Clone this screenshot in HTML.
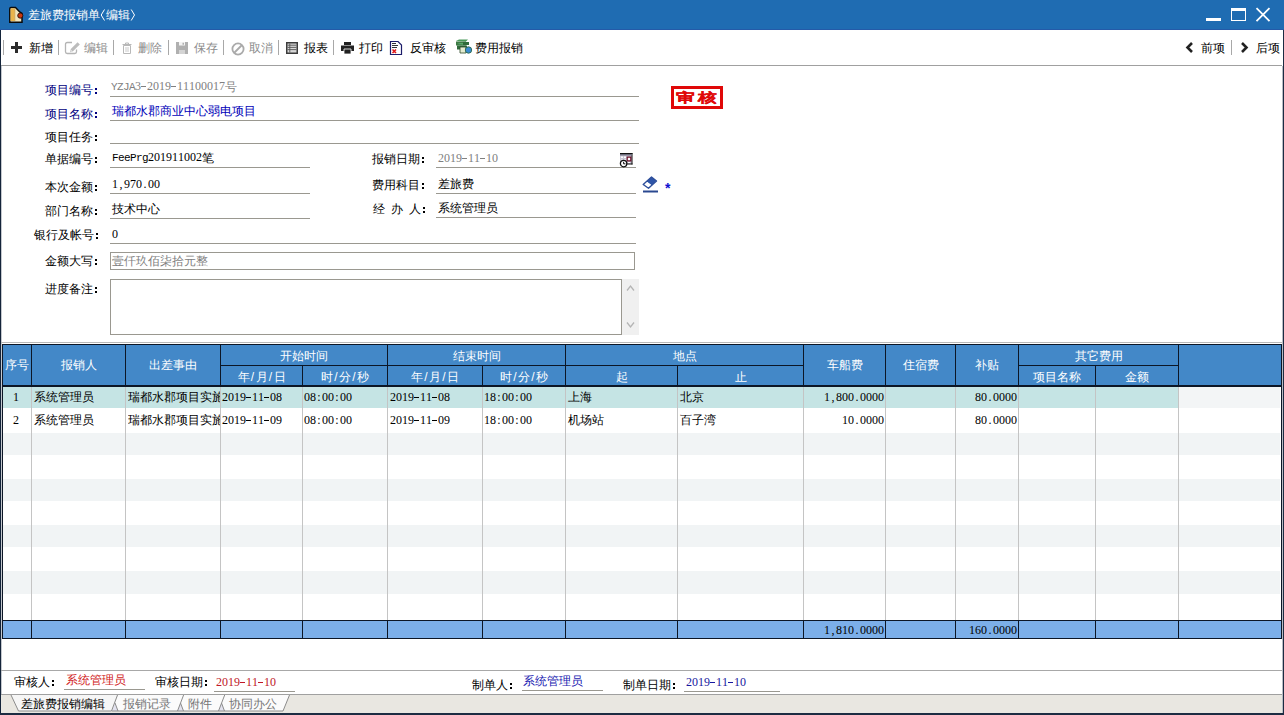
<!DOCTYPE html>
<html><head><meta charset="utf-8">
<style>
html,body{margin:0;padding:0;width:1284px;height:715px;overflow:hidden;background:#fff;position:relative;font-family:"Liberation Sans",sans-serif;font-size:12px;line-height:12px;color:#000}
.a{position:absolute;white-space:nowrap}
.m{font-family:"Liberation Serif",serif}
.m i{display:inline-block;width:6px;text-align:center;font-style:normal}
.m i.d{position:relative}
.m i.l{font-family:"Liberation Mono",monospace;font-size:11px}
.m b{position:relative;top:1px}
.m i.d::before{content:"";position:absolute;left:0;right:1px;top:6px;height:1px;background:currentColor}
.m b{font-family:"Liberation Sans",sans-serif;font-weight:normal}
.hl{position:absolute;height:1px;background:#9a9890}
.sep{position:absolute;top:40px;width:1px;height:15px;background:#a8a8a8}
.gv{position:absolute;width:1px;background:#c4c4c4}
.hd{position:absolute;color:#fff;text-align:center}
.c{display:inline-block;position:relative;width:12px;height:12px;vertical-align:top}
.c::before{content:"";position:absolute;left:2px;top:4px;width:2px;height:2px;background:currentColor;box-shadow:0 4px 0 currentColor}
s{text-decoration:none;display:inline-block;width:6px;text-align:center}
.dk{position:absolute;background:#0c1626}
</style></head><body>
<!-- title bar -->
<div class="a" style="left:0;top:0;width:1284px;height:30px;background:#1f6cb2"></div>
<div class="a" style="left:0;top:29px;width:1284px;height:1px;background:#245aa8"></div>
<svg class="a" style="left:8px;top:6px" width="16" height="17" viewBox="0 0 16 17">
<path d="M1.8 2.8 Q1.8 1.6 3 1.6 L7.5 1.6 L12 6.2 L14 7.5 L14 16.3 L1.8 16.3 Z" fill="#f1e6c0" stroke="#0a0a0a" stroke-width="1.5"/>
<path d="M2.6 2.4 L6.5 2.4 L6.5 15 L2.6 15 Z" fill="#e9b44c"/>
<path d="M6.5 2.4 L7.2 2.4 L7.2 15 L6.5 15 Z" fill="#c89030"/>
<circle cx="12.3" cy="9.6" r="2.6" fill="#c8380e" stroke="#1a0a08" stroke-width="0.8"/>
</svg>
<div class="a" style="left:28px;top:9px;color:#fff">差旅费报销单<svg width="6" height="12" style="vertical-align:top"><path d="M4.5 0.5L1.2 6 4.5 11.5" stroke="#fff" fill="none" stroke-width="1"/></svg>编辑<svg width="6" height="12" style="vertical-align:top"><path d="M1.2 0.5L4.5 6 1.2 11.5" stroke="#fff" fill="none" stroke-width="1"/></svg></div>
<div class="a" style="left:1206px;top:18px;width:15px;height:3px;background:#fff"></div>
<div class="a" style="left:1231px;top:8px;width:13px;height:9px;border:1px solid #fff;border-top-width:3px"></div>
<svg class="a" style="left:1255px;top:7px" width="17" height="16" viewBox="0 0 17 16"><path d="M1.5 1.2 L14.5 14.2 M14.5 1.2 L1.5 14.2" stroke="#fff" stroke-width="1.8"/></svg>

<!-- window borders -->
<div class="a" style="left:0;top:30px;width:1px;height:685px;background:#14243a"></div>
<div class="a" style="left:1px;top:66px;width:1px;height:647px;background:#c4c8ce"></div>
<div class="a" style="left:1283px;top:30px;width:1px;height:685px;background:#1c2c42"></div>
<div class="a" style="left:1282px;top:66px;width:1px;height:649px;background:#b8bcc4"></div>

<!-- toolbar -->
<div class="sep" style="left:3px"></div>
<svg class="a" style="left:11px;top:42px" width="11" height="11"><path d="M0 4h11v3H0z M4 0h3v11H4z" fill="#2b2b2b"/></svg>
<div class="a" style="left:29px;top:42px">新增</div>
<div class="sep" style="left:58px"></div>
<svg class="a" style="left:64px;top:41px" width="17" height="14" viewBox="0 0 17 14"><path d="M8 1.5H3.2Q1.5 1.5 1.5 3.2V10.8Q1.5 12.5 3.2 12.5H10.8Q12.5 12.5 12.5 10.8V8.5" stroke="#b4b4b4" stroke-width="1.3" fill="none"/><path d="M6 11.2L6.8 8 13.6 1.2 15.8 3.4 9 10.2z" fill="#bcbcbc"/><path d="M6.6 10.6l0.4-1.6 1.2 1.2z" fill="#fff"/></svg>
<div class="a" style="left:84px;top:42px;color:#8c8c8c">编辑</div>
<div class="sep" style="left:113px"></div>
<svg class="a" style="left:122px;top:42px" width="10" height="12" viewBox="0 0 10 12"><path d="M0.5 2.5h9M3.5 2.5V1h3v1.5" stroke="#b8b8b8" stroke-width="1" fill="none"/><path d="M1.5 3.5h7v8h-7z" stroke="#b8b8b8" stroke-width="1" fill="none"/><path d="M4 5v5M6 5v5" stroke="#c4c4c4" stroke-width="0.9"/></svg>
<div class="a" style="left:138px;top:42px;color:#8c8c8c">删除</div>
<div class="sep" style="left:168px"></div>
<svg class="a" style="left:176px;top:42px" width="12" height="12" viewBox="0 0 12 12"><path d="M0 0h12v12H0z" fill="#b0b0b0"/><path d="M3 0h6v3.5H3z" fill="#f4f4f4"/><path d="M6.5 0.8h1.5v2h-1.5z" fill="#b0b0b0"/><path d="M3 8h6v4H3z" fill="#d4d4d4"/></svg>
<div class="a" style="left:194px;top:42px;color:#8c8c8c">保存</div>
<div class="sep" style="left:223px"></div>
<svg class="a" style="left:231px;top:42px" width="14" height="14" viewBox="0 0 14 14"><circle cx="7" cy="7" r="5.6" fill="none" stroke="#aaa" stroke-width="1.8"/><path d="M3 11L11 3" stroke="#aaa" stroke-width="1.8"/></svg>
<div class="a" style="left:249px;top:42px;color:#8c8c8c">取消</div>
<div class="sep" style="left:278px"></div>
<svg class="a" style="left:286px;top:42px" width="12" height="12" viewBox="0 0 12 12"><path d="M0 0h12v12H0z" fill="#3c3c3c"/><path d="M1.5 1.5h9v9h-9z" fill="#d8d8d8"/><path d="M1.5 3.2h9M1.5 5.4h9M1.5 7.6h9M3.8 1.5v9" stroke="#555" stroke-width="0.9"/></svg>
<div class="a" style="left:304px;top:42px">报表</div>
<div class="sep" style="left:333px"></div>
<svg class="a" style="left:341px;top:42px" width="13" height="12" viewBox="0 0 13 12"><path d="M3 0h7v3H3z" fill="#222"/><path d="M0 3.5h13v5.5H0z" fill="#222"/><path d="M3 7h7v5H3z" fill="#222" stroke="#fff" stroke-width="0.8"/></svg>
<div class="a" style="left:359px;top:42px">打印</div>
<svg class="a" style="left:389px;top:40px" width="15" height="16" viewBox="0 0 15 16"><path d="M1.5 1.5h7.5l3.5 3.5V14.5H1.5z" fill="#fff" stroke="#1c1c6a" stroke-width="1.2"/><path d="M3 3.5h4M3 5.5h6M3 7.5h5" stroke="#333" stroke-width="1"/><path d="M3.5 9.5l3.5 3.5M7 9.5l-3.5 3.5" stroke="#e01818" stroke-width="1.6"/></svg>
<div class="a" style="left:410px;top:42px">反审核</div>
<svg class="a" style="left:456px;top:39px" width="17" height="16" viewBox="0 0 17 16"><path d="M0 2l3-1.5h9l-2 2z" fill="#4a9a5a"/><path d="M0 2.5h10v4H0z" fill="#3d7a44"/><path d="M1 5l3-1h9l-2 2z" fill="#5aa86a"/><path d="M1 6.5h10v4H1z" fill="#2f6b3a"/><path d="M7 3h6v3H7z" fill="#2f6b3a"/><path d="M4 8h6v6H4z" fill="#e4ecd0" stroke="#2f4a2a" stroke-width="0.8"/><circle cx="12.5" cy="11" r="3.2" fill="#3a8ad0" stroke="#2a6a4a" stroke-width="0.9"/></svg>
<div class="a" style="left:475px;top:42px">费用报销</div>

<svg class="a" style="left:1185px;top:42px" width="9" height="11" viewBox="0 0 9 11"><path d="M7 1L2.5 5.5 7 10" fill="none" stroke="#222" stroke-width="2.6"/></svg>
<div class="a" style="left:1201px;top:42px">前项</div>
<div class="sep" style="left:1231px"></div>
<svg class="a" style="left:1240px;top:42px" width="9" height="11" viewBox="0 0 9 11"><path d="M2 1l4.5 4.5L2 10" fill="none" stroke="#222" stroke-width="2.6"/></svg>
<div class="a" style="left:1256px;top:42px">后项</div>

<div class="a" style="left:1px;top:65px;width:1281px;height:1px;background:#a0a0a0"></div>

<!-- form -->
<div class="a" style="left:45px;top:84px;color:#000080">项目编号<i class="c"></i></div>
<div class="a m" style="left:111px;top:80px;color:#808080"><i class="l">Y</i><i class="l">Z</i><i class="l">J</i><i class="l">A</i><i>3</i><i class="d">&nbsp;</i><i>2</i><i>0</i><i>1</i><i>9</i><i class="d">&nbsp;</i><i>1</i><i>1</i><i>1</i><i>0</i><i>0</i><i>0</i><i>1</i><i>7</i><b>号</b></div>
<div class="hl" style="left:110px;top:96px;width:529px"></div>
<div class="a" style="left:45px;top:108px;color:#000080">项目名称<i class="c"></i></div>
<div class="a" style="left:112px;top:105px;color:#0000b8">瑞都水郡商业中心弱电项目</div>
<div class="hl" style="left:110px;top:120px;width:529px"></div>
<div class="a" style="left:45px;top:131px">项目任务<i class="c"></i></div>
<div class="hl" style="left:110px;top:143px;width:529px"></div>

<div class="a" style="left:45px;top:153px">单据编号<i class="c"></i></div>
<div class="a m" style="left:112px;top:151px"><i class="l">F</i><i class="l">e</i><i class="l">e</i><i class="l">P</i><i class="l">r</i><i class="l">g</i><i>2</i><i>0</i><i>1</i><i>9</i><i>1</i><i>1</i><i>0</i><i>0</i><i>2</i><b>笔</b></div>
<div class="hl" style="left:110px;top:167px;width:200px"></div>
<div class="a" style="left:45px;top:181px">本次金额<i class="c"></i></div>
<div class="a m" style="left:112px;top:178px"><i>1</i><i>,</i><i>9</i><i>7</i><i>0</i><i>.</i><i>0</i><i>0</i></div>
<div class="hl" style="left:110px;top:193px;width:200px"></div>
<div class="a" style="left:45px;top:205px">部门名称<i class="c"></i></div>
<div class="a" style="left:112px;top:203px">技术中心</div>
<div class="hl" style="left:110px;top:218px;width:200px"></div>
<div class="a" style="left:34px;top:229px">银行及帐号<i class="c"></i></div>
<div class="a m" style="left:112px;top:228px"><i>0</i></div>
<div class="hl" style="left:110px;top:243px;width:526px"></div>
<div class="a" style="left:45px;top:255px">金额大写<i class="c"></i></div>
<div class="a" style="left:110px;top:252px;width:523px;height:16px;border:1px solid #9a9890"></div>
<div class="a" style="left:112px;top:255px;color:#808080">壹仟玖佰柒拾元整</div>
<div class="a" style="left:45px;top:283px">进度备注<i class="c"></i></div>
<div class="a" style="left:110px;top:279px;width:510px;height:54px;border:1px solid #9a9890"></div>
<div class="a" style="left:622px;top:279px;width:17px;height:56px;background:#f0f0f0"></div>
<svg class="a" style="left:626px;top:284px" width="9" height="8"><path d="M1 6.5L4.5 2 8 6.5" fill="none" stroke="#b4b4b4" stroke-width="1.3"/></svg>
<svg class="a" style="left:626px;top:321px" width="9" height="8"><path d="M1 1.5L4.5 6 8 1.5" fill="none" stroke="#b4b4b4" stroke-width="1.3"/></svg>

<div class="a" style="left:372px;top:153px">报销日期<i class="c"></i></div>
<div class="a m" style="left:438px;top:152px;color:#808080"><i>2</i><i>0</i><i>1</i><i>9</i><i class="d">&nbsp;</i><i>1</i><i>1</i><i class="d">&nbsp;</i><i>1</i><i>0</i></div>
<div class="hl" style="left:436px;top:167px;width:200px"></div>
<svg class="a" style="left:619px;top:152px" width="14" height="16" viewBox="0 0 14 16"><path d="M1 1h12v11H1z" fill="#c9c6d6"/><path d="M1 1.5h12.5M13 1v11.5M1 12h12.5" stroke="#111" stroke-width="1"/><path d="M1 2h12v1.5H1z" fill="#6a6a7a"/><path d="M2 4.5h2v1.5H2zM5 4.5h2v1.5H5zM2 7.5h2v1.5H2zM5 7.5h2v1.5H5zM9 10h2v1H9z" fill="#fff"/><path d="M8.2 5.2h3.6v3.6H8.2z" fill="#fff" stroke="#6a1028" stroke-width="1.2"/><circle cx="4.6" cy="11.6" r="3.2" fill="#fff" stroke="#111" stroke-width="1.3"/><path d="M4.6 9.8v2h1.8" stroke="#111" stroke-width="1" fill="none"/></svg>
<div class="a" style="left:372px;top:179px">费用科目<i class="c"></i></div>
<div class="a" style="left:438px;top:178px">差旅费</div>
<div class="hl" style="left:436px;top:193px;width:200px"></div>
<svg class="a" style="left:642px;top:176px" width="17" height="17" viewBox="0 0 17 17"><path d="M4.5 5.5L9.5 1 14.5 5 9.7 9.3z" fill="#2e55a8"/><path d="M1.2 8.5L4.5 5.5 9.7 9.3 6.5 12.2z" fill="#fff"/><path d="M1.2 8.5L9.5 1 14.5 5 6.5 12.2z" fill="none" stroke="#2e4f9a" stroke-width="1.4" stroke-linejoin="round"/><path d="M1 15.5h15" stroke="#2a4890" stroke-width="2"/></svg>
<div class="a" style="left:665px;top:181px;color:#1010d0;font-weight:bold;font-size:14px;line-height:14px">*</div>
<div class="a" style="left:373px;top:203px">经</div>
<div class="a" style="left:391px;top:203px">办</div>
<div class="a" style="left:409px;top:203px">人<i class="c"></i></div>
<div class="a" style="left:438px;top:202px">系统管理员</div>
<div class="hl" style="left:436px;top:217px;width:200px"></div>

<!-- stamp -->
<div class="a" style="left:671px;top:86px;width:46px;height:17px;border:3px solid #e00808"></div>
<div class="a" style="left:676px;top:91px;color:#e00808;font-weight:bold;font-size:13px;line-height:13px;letter-spacing:2.3px;transform:scaleX(1.44);transform-origin:0 0;-webkit-text-stroke:0.25px #e00808">审核</div>

<div class="a" style="left:1px;top:342px;width:1281px;height:1px;background:#b8b8b8"></div>

<!-- grid -->
<!--GRID-->
<div class="a" style="left:2px;top:344px;width:1280px;height:43px;background:#0c1626"></div>
<div class="a" style="left:3px;top:345px;width:1278px;height:40px;background:#4388c8"></div>
<div class="dk" style="left:31px;top:345px;width:1px;height:40px"></div>
<div class="dk" style="left:125px;top:345px;width:1px;height:40px"></div>
<div class="dk" style="left:220px;top:345px;width:1px;height:40px"></div>
<div class="dk" style="left:387px;top:345px;width:1px;height:40px"></div>
<div class="dk" style="left:565px;top:345px;width:1px;height:40px"></div>
<div class="dk" style="left:803px;top:345px;width:1px;height:40px"></div>
<div class="dk" style="left:885px;top:345px;width:1px;height:40px"></div>
<div class="dk" style="left:955px;top:345px;width:1px;height:40px"></div>
<div class="dk" style="left:1018px;top:345px;width:1px;height:40px"></div>
<div class="dk" style="left:1178px;top:345px;width:1px;height:40px"></div>
<div class="dk" style="left:220px;top:365px;width:167px;height:1px"></div>
<div class="dk" style="left:387px;top:365px;width:178px;height:1px"></div>
<div class="dk" style="left:565px;top:365px;width:238px;height:1px"></div>
<div class="dk" style="left:1018px;top:365px;width:160px;height:1px"></div>
<div class="dk" style="left:302px;top:365px;width:1px;height:20px"></div>
<div class="dk" style="left:482px;top:365px;width:1px;height:20px"></div>
<div class="dk" style="left:677px;top:365px;width:1px;height:20px"></div>
<div class="dk" style="left:1095px;top:365px;width:1px;height:20px"></div>
<div class="dk" style="left:2px;top:387px;width:1px;height:252px"></div>
<div class="dk" style="left:1281px;top:387px;width:1px;height:252px"></div>
<div class="a" style="left:3px;top:387px;width:1175px;height:21px;background:#c5e4e4"></div>
<div class="a" style="left:1179px;top:387px;width:101px;height:21px;background:#f3f5f6"></div>
<div class="a" style="left:3px;top:433px;width:1277px;height:22px;background:#f1f4f5"></div>
<div class="a" style="left:3px;top:479px;width:1277px;height:22px;background:#f1f4f5"></div>
<div class="a" style="left:3px;top:525px;width:1277px;height:22px;background:#f1f4f5"></div>
<div class="a" style="left:3px;top:571px;width:1277px;height:23px;background:#f1f4f5"></div>
<div class="gv" style="left:31px;top:387px;height:233px"></div>
<div class="gv" style="left:125px;top:387px;height:233px"></div>
<div class="gv" style="left:220px;top:387px;height:233px"></div>
<div class="gv" style="left:387px;top:387px;height:233px"></div>
<div class="gv" style="left:565px;top:387px;height:233px"></div>
<div class="gv" style="left:803px;top:387px;height:233px"></div>
<div class="gv" style="left:885px;top:387px;height:233px"></div>
<div class="gv" style="left:955px;top:387px;height:233px"></div>
<div class="gv" style="left:1018px;top:387px;height:233px"></div>
<div class="gv" style="left:1178px;top:387px;height:233px"></div>
<div class="gv" style="left:302px;top:387px;height:233px"></div>
<div class="gv" style="left:482px;top:387px;height:233px"></div>
<div class="gv" style="left:677px;top:387px;height:233px"></div>
<div class="gv" style="left:1095px;top:387px;height:233px"></div>
<div class="dk" style="left:2px;top:620px;width:1280px;height:19px"></div>
<div class="a" style="left:3px;top:621px;width:1278px;height:17px;background:#7cafe9"></div>
<div class="dk" style="left:31px;top:621px;width:1px;height:17px"></div>
<div class="dk" style="left:125px;top:621px;width:1px;height:17px"></div>
<div class="dk" style="left:220px;top:621px;width:1px;height:17px"></div>
<div class="dk" style="left:387px;top:621px;width:1px;height:17px"></div>
<div class="dk" style="left:565px;top:621px;width:1px;height:17px"></div>
<div class="dk" style="left:803px;top:621px;width:1px;height:17px"></div>
<div class="dk" style="left:885px;top:621px;width:1px;height:17px"></div>
<div class="dk" style="left:955px;top:621px;width:1px;height:17px"></div>
<div class="dk" style="left:1018px;top:621px;width:1px;height:17px"></div>
<div class="dk" style="left:1178px;top:621px;width:1px;height:17px"></div>
<div class="dk" style="left:302px;top:621px;width:1px;height:17px"></div>
<div class="dk" style="left:482px;top:621px;width:1px;height:17px"></div>
<div class="dk" style="left:677px;top:621px;width:1px;height:17px"></div>
<div class="dk" style="left:1095px;top:621px;width:1px;height:17px"></div>
<div class="hd" style="left:3px;top:359px;width:28px">序号</div>
<div class="hd" style="left:32px;top:359px;width:93px">报销人</div>
<div class="hd" style="left:126px;top:359px;width:94px">出差事由</div>
<div class="hd" style="left:221px;top:350px;width:166px">开始时间</div>
<div class="hd" style="left:221px;top:371px;width:81px">年<s>/</s>月<s>/</s>日</div>
<div class="hd" style="left:303px;top:371px;width:84px">时<s>/</s>分<s>/</s>秒</div>
<div class="hd" style="left:388px;top:350px;width:177px">结束时间</div>
<div class="hd" style="left:388px;top:371px;width:94px">年<s>/</s>月<s>/</s>日</div>
<div class="hd" style="left:483px;top:371px;width:82px">时<s>/</s>分<s>/</s>秒</div>
<div class="hd" style="left:566px;top:350px;width:237px">地点</div>
<div class="hd" style="left:566px;top:371px;width:111px">起</div>
<div class="hd" style="left:678px;top:371px;width:125px">止</div>
<div class="hd" style="left:804px;top:359px;width:81px">车船费</div>
<div class="hd" style="left:886px;top:359px;width:69px">住宿费</div>
<div class="hd" style="left:956px;top:359px;width:62px">补贴</div>
<div class="hd" style="left:1019px;top:350px;width:159px">其它费用</div>
<div class="hd" style="left:1019px;top:371px;width:76px">项目名称</div>
<div class="hd" style="left:1096px;top:371px;width:82px">金额</div>
<div class="a m" style="left:13px;top:391px"><i>1</i></div>
<div class="a" style="left:34px;top:391px">系统管理员</div>
<div class="a" style="left:128px;top:391px;width:92px;overflow:hidden">瑞都水郡项目实施</div>
<div class="a m" style="left:222px;top:391px"><i>2</i><i>0</i><i>1</i><i>9</i><i class="d">&nbsp;</i><i>1</i><i>1</i><i class="d">&nbsp;</i><i>0</i><i>8</i></div>
<div class="a m" style="left:304px;top:391px"><i>0</i><i>8</i><i>:</i><i>0</i><i>0</i><i>:</i><i>0</i><i>0</i></div>
<div class="a m" style="left:390px;top:391px"><i>2</i><i>0</i><i>1</i><i>9</i><i class="d">&nbsp;</i><i>1</i><i>1</i><i class="d">&nbsp;</i><i>0</i><i>8</i></div>
<div class="a m" style="left:484px;top:391px"><i>1</i><i>8</i><i>:</i><i>0</i><i>0</i><i>:</i><i>0</i><i>0</i></div>
<div class="a" style="left:568px;top:391px">上海</div>
<div class="a" style="left:680px;top:391px">北京</div>
<div class="a m" style="right:400px;top:391px"><i>1</i><i>,</i><i>8</i><i>0</i><i>0</i><i>.</i><i>0</i><i>0</i><i>0</i><i>0</i></div>
<div class="a m" style="right:267px;top:391px"><i>8</i><i>0</i><i>.</i><i>0</i><i>0</i><i>0</i><i>0</i></div>
<div class="a m" style="left:13px;top:414px"><i>2</i></div>
<div class="a" style="left:34px;top:414px">系统管理员</div>
<div class="a" style="left:128px;top:414px;width:92px;overflow:hidden">瑞都水郡项目实施</div>
<div class="a m" style="left:222px;top:414px"><i>2</i><i>0</i><i>1</i><i>9</i><i class="d">&nbsp;</i><i>1</i><i>1</i><i class="d">&nbsp;</i><i>0</i><i>9</i></div>
<div class="a m" style="left:304px;top:414px"><i>0</i><i>8</i><i>:</i><i>0</i><i>0</i><i>:</i><i>0</i><i>0</i></div>
<div class="a m" style="left:390px;top:414px"><i>2</i><i>0</i><i>1</i><i>9</i><i class="d">&nbsp;</i><i>1</i><i>1</i><i class="d">&nbsp;</i><i>0</i><i>9</i></div>
<div class="a m" style="left:484px;top:414px"><i>1</i><i>8</i><i>:</i><i>0</i><i>0</i><i>:</i><i>0</i><i>0</i></div>
<div class="a" style="left:568px;top:414px">机场站</div>
<div class="a" style="left:680px;top:414px">百子湾</div>
<div class="a m" style="right:400px;top:414px"><i>1</i><i>0</i><i>.</i><i>0</i><i>0</i><i>0</i><i>0</i></div>
<div class="a m" style="right:267px;top:414px"><i>8</i><i>0</i><i>.</i><i>0</i><i>0</i><i>0</i><i>0</i></div>
<div class="a m" style="right:400px;top:624px"><i>1</i><i>,</i><i>8</i><i>1</i><i>0</i><i>.</i><i>0</i><i>0</i><i>0</i><i>0</i></div>
<div class="a m" style="right:267px;top:624px"><i>1</i><i>6</i><i>0</i><i>.</i><i>0</i><i>0</i><i>0</i><i>0</i></div>
<!--/GRID-->

<!-- footer -->
<div class="a" style="left:1px;top:670px;width:1281px;height:1px;background:#a8a8a8"></div>
<div class="a" style="left:14px;top:676px">审核人<i class="c"></i></div>
<div class="a" style="left:66px;top:674px;color:#d01818">系统管理员</div>
<div class="hl" style="left:64px;top:689px;width:81px"></div>
<div class="a" style="left:155px;top:676px">审核日期<i class="c"></i></div>
<div class="a m" style="left:216px;top:676px;color:#c01828"><i>2</i><i>0</i><i>1</i><i>9</i><i class="d">&nbsp;</i><i>1</i><i>1</i><i class="d">&nbsp;</i><i>1</i><i>0</i></div>
<div class="hl" style="left:214px;top:691px;width:81px"></div>
<div class="a" style="left:472px;top:679px">制单人<i class="c"></i></div>
<div class="a" style="left:523px;top:675px;color:#1818b0">系统管理员</div>
<div class="hl" style="left:522px;top:690px;width:81px"></div>
<div class="a" style="left:623px;top:679px">制单日期<i class="c"></i></div>
<div class="a m" style="left:686px;top:676px;color:#1818a0"><i>2</i><i>0</i><i>1</i><i>9</i><i class="d">&nbsp;</i><i>1</i><i>1</i><i class="d">&nbsp;</i><i>1</i><i>0</i></div>
<div class="hl" style="left:684px;top:691px;width:96px"></div>
<!-- tabs -->
<div class="a" style="left:1px;top:694px;width:1281px;height:1px;background:#a0a0a0"></div>
<div class="a" style="left:1px;top:695px;width:1281px;height:18px;background:#e9e7e1"></div>
<svg class="a" style="left:0;top:694px" width="300" height="20" viewBox="0 0 300 20">
<path d="M11 1 L18.5 17 L111.5 17 L117.5 1 Z" fill="#f6f6f6"/>
<path d="M118 1 L112 17 L283 17 L289.5 1 Z" fill="#fbfbfb"/>
<path d="M112 17 L115 9 L118 17Z M177.5 17 L180.5 9 L183.5 17Z M218.5 17 L221.5 9 L224.5 17Z" fill="#e2e2ee"/>
<path d="M11 1 L18.5 17 L111.5 17 L117.5 1 M112 17 L283 17 M177.5 17 L183.6 1 M218.5 17 L224.7 1 M283 17 L289.5 1 M115 9 L118 17 M180.5 9 L183.5 17 M221.5 9 L224.5 17" fill="none" stroke="#8c8c8c" stroke-width="1"/>
</svg>
<div class="a" style="left:21px;top:698px">差旅费报销编辑</div>
<div class="a" style="left:123px;top:698px;color:#767676">报销记录</div>
<div class="a" style="left:188px;top:698px;color:#767676">附件</div>
<div class="a" style="left:229px;top:698px;color:#767676">协同办公</div>
<div class="a" style="left:0;top:713px;width:1284px;height:2px;background:#1c2c42"></div>
</body></html>
